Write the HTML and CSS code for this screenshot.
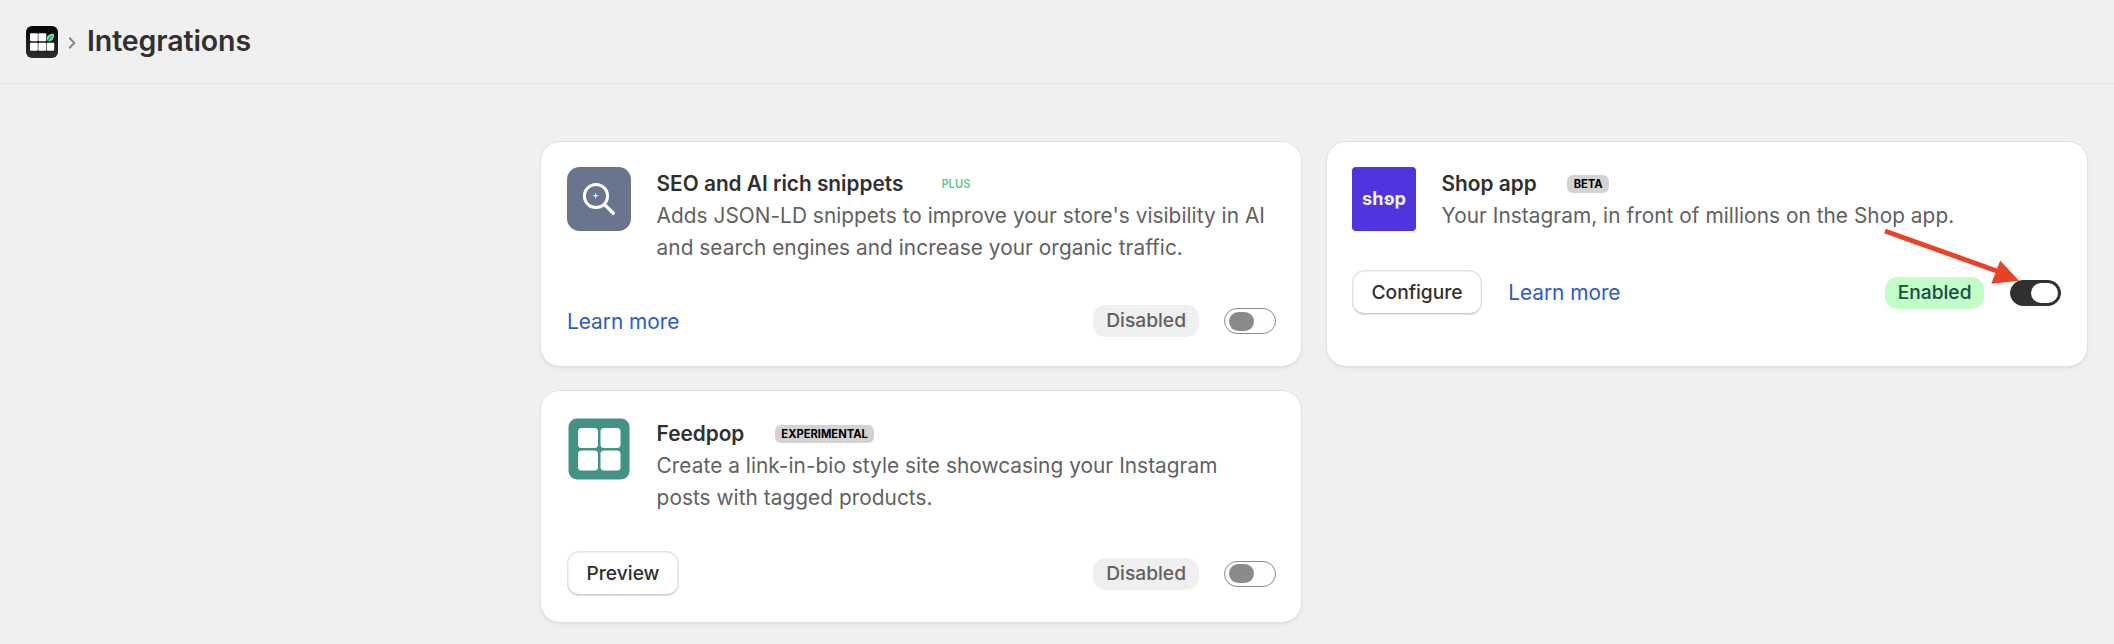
FILE: index.html
```html
<!DOCTYPE html>
<html lang="en">
<head>
<meta charset="utf-8">
<title>Integrations</title>
<link rel="stylesheet" href="styles.css">
</head>
<body>
<header class="topbar">
  <svg class="app-icon" viewBox="0 0 32 32">
    <defs><linearGradient id="dark" x1="0" y1="0" x2="0" y2="1"><stop offset="0" stop-color="#050505"/><stop offset="1" stop-color="#2e2e2e"/></linearGradient></defs>
    <rect width="32" height="32" rx="6" fill="url(#dark)"/>
    <g fill="#fff"><rect x="4" y="7.3" width="7.8" height="8" rx="1"/><rect x="12.4" y="7.3" width="7.8" height="8" rx="1"/><rect x="4" y="16.8" width="7.8" height="8" rx="1"/><rect x="12.4" y="16.8" width="7.8" height="8" rx="1"/><rect x="20.8" y="16.8" width="7.4" height="8" rx="1"/></g>
    <path d="M28 7.7C23 7.7 20.500 9.500 20.700 13.300L21.500 15.300C26 15.800 28.200 13 28 7.700Z" fill="#5fe0a0"/>
    <path d="M21.300 15.400L25.400 10.200" stroke="#1a3a2a" stroke-width=".8"/>
  </svg>
  <svg class="chevron" viewBox="0 0 8 12"><path d="M1.300 .8L6.300 6L1.300 11.200" fill="none" stroke="#858585" stroke-width="2"/></svg>
  <h1 class="page-title">Integrations</h1>
</header>
<main class="grid">
  <section class="card">
    <div class="info">
      <svg class="logo" viewBox="0 0 64 64">
        <rect width="64" height="64" rx="12.500" fill="#68758d"/>
        <g fill="none" stroke="#fff" stroke-linecap="round"><circle cx="29" cy="29" r="11.600" stroke-width="3"/><path d="M37.600 37.600L46.300 46.300" stroke-width="3.400"/></g>
        <path d="M28.600 25.500L29.300 28.100L31.900 28.800L29.300 29.500L28.600 32.100L27.900 29.500L25.300 28.800L27.900 28.100Z" fill="#fff"/>
      </svg>
      <div class="text">
        <div class="heading"><h2 class="name">SEO and AI rich snippets</h2><span class="tag tag-plus">PLUS</span></div>
        <p class="desc">Adds JSON-LD snippets to improve your store's visibility in AI<br>and search engines and increase your organic traffic.</p>
      </div>
    </div>
    <div class="actions actions-plain">
      <a class="link">Learn more</a>
      <span class="badge">Disabled</span>
      <span class="toggle"></span>
    </div>
  </section>
  <section class="card card-shop">
    <div class="info">
      <svg class="logo" viewBox="0 0 64 64">
        <rect width="64" height="64" rx="4" fill="#5034e0"/>
        <text class="shop-word" x="10" y="37.500" textLength="44" lengthAdjust="spacingAndGlyphs">shop</text>
        <path d="M30 33.500H34.500" stroke="#5034e0" stroke-width="2"/>
        <path d="M35 30.500V33.500H38" fill="none" stroke="#f4f1ee" stroke-width="1.400"/>
      </svg>
      <div class="text">
        <div class="heading"><h2 class="name">Shop app</h2><span class="tag">BETA</span></div>
        <p class="desc">Your Instagram, in front of millions on the Shop app.</p>
      </div>
    </div>
    <div class="actions">
      <button class="button">Configure</button>
      <a class="link">Learn more</a>
      <span class="badge badge-on">Enabled</span>
      <span class="toggle toggle-on"></span>
    </div>
    <svg class="arrow" viewBox="0 0 140 60"><path d="M3 4L119 45.500" stroke="#ea4226" stroke-width="5"/><path d="M118.200 33.500L137 53.700L109.300 56.800Z" fill="#ea4226"/></svg>
  </section>
  <section class="card card-feedpop">
    <div class="info">
      <svg class="logo" viewBox="0 0 64 64">
        <rect x="1.500" y="1.500" width="61" height="61" rx="8.500" fill="#439286"/>
        <g fill="#fff"><rect x="11" y="11" width="20" height="20" rx="3.500"/><rect x="33.500" y="11" width="20" height="20" rx="3.500"/><rect x="11" y="33.500" width="20" height="20" rx="3.500"/><rect x="33.500" y="33.500" width="20" height="20" rx="3.500"/></g>
      </svg>
      <div class="text">
        <div class="heading"><h2 class="name">Feedpop</h2><span class="tag">EXPERIMENTAL</span></div>
        <p class="desc">Create a link-in-bio style site showcasing your Instagram<br>posts with tagged products.</p>
      </div>
    </div>
    <div class="actions">
      <button class="button">Preview</button>
      <span class="badge">Disabled</span>
      <span class="toggle"></span>
    </div>
  </section>
</main>
</body>
</html>
```

FILE: styles.css
```css
* { box-sizing: border-box; }
body {
  margin: 0;
  height: 644px;
  overflow: hidden;
  background: #f0f0f0;
  font-family: Inter, sans-serif;
  color: #303030;
}
.topbar {
  display: flex;
  align-items: center;
  height: 84px;
  padding-left: 26px;
  border-bottom: 1px solid #e7e7e7;
}
.app-icon { width: 32px; height: 32px; }
.chevron { width: 8px; height: 12px; margin: 3px 11px 0 10px; }
.page-title {
  margin: 0;
  padding-bottom: 2px;
  font-size: 28.500px;
  line-height: 38px;
  font-weight: 600;
  letter-spacing: -.1px;
  white-space: nowrap;
}
.grid {
  display: grid;
  grid-template-columns: 760px 760px;
  grid-template-rows: 224px 231px;
  gap: 25px 26px;
  padding: 58px 0 0 541px;
}
.card {
  position: relative;
  padding: 25px 25px 0 26px;
  background: #fff;
  border-radius: 19px;
  box-shadow: 0 0 0 1px #e2e2e2, 0 1px 1px #b5b5b5, 0 3px 5px rgba(0,0,0,.05);
}
.card-shop { padding: 25px 26px 0 25px; }
.card-feedpop { padding-top: 26px; }
.info { display: flex; gap: 25.600px; }
.logo { width: 64px; height: 64px; flex: none; }
.shop-word { fill: #f4f1ee; font: 700 18.500px Inter, sans-serif; }
.text { padding-top: 1px; margin-bottom: -1px; white-space: nowrap; }
.heading { display: flex; align-items: center; height: 32px; }
.name { margin: 0; font-size: 20.800px; line-height: 32px; font-weight: 600; }
.desc {
  margin: 0;
  font-size: 20.800px;
  line-height: 32px;
  letter-spacing: .05px;
  color: #616161;
}
.tag {
  height: 18px;
  margin-left: 30.500px;
  padding: 0 6.500px;
  border-radius: 6px;
  background: #d3d3d3;
  color: #000;
  font-size: 11.200px;
  line-height: 18px;
  font-weight: 700;
}
.tag-plus { margin-left: 31.500px; background: none; color: #5fcb85; font-weight: 600; }
.actions { display: flex; align-items: center; height: 45px; margin-top: 38px; }
.card-shop .actions { margin-top: 39px; }
.actions-plain { height: 32px; margin-top: 42px; }
.link { padding-top: 1px; font-size: 20.800px; line-height: 32px; color: #2a5bd0; }
.button {
  height: 45px;
  padding: 0 19.500px 1px;
  border: 0;
  border-radius: 12.800px;
  background: #fff;
  box-shadow: inset 0 0 0 1.500px #e3e3e3, inset 0 -2px 0 #b5b5b5;
  color: #303030;
  font: 500 19.200px/32px Inter, sans-serif;
}
.button + .link { margin-left: 26px; }
.badge {
  height: 32px;
  margin-left: auto;
  padding: 0 13px;
  border-radius: 12.800px;
  background: #efefef;
  color: #616161;
  font-size: 19.200px;
  line-height: 31px;
  font-weight: 500;
}
.badge-on { padding: 0 12.500px; background: #c1fdc5; color: #1c4a44; }
.toggle {
  display: flex;
  align-items: center;
  width: 52px;
  height: 26px;
  margin-left: 25px;
  padding-left: 4px;
  border: 1px solid #8a8a8a;
  border-radius: 13px;
  background: #fdfdfd;
}
.toggle::before { content: ""; width: 25px; height: 19px; border-radius: 9.500px; background: #8a8a8a; }
.toggle-on { width: 51px; margin-left: 26px; background: #303030; border-color: #303030; padding-left: 20px; }
.toggle-on::before { width: 27px; height: 20px; border-radius: 10px; background: #fff; }
.arrow { position: absolute; left: 555px; top: 85px; width: 140px; height: 60px; }
```
